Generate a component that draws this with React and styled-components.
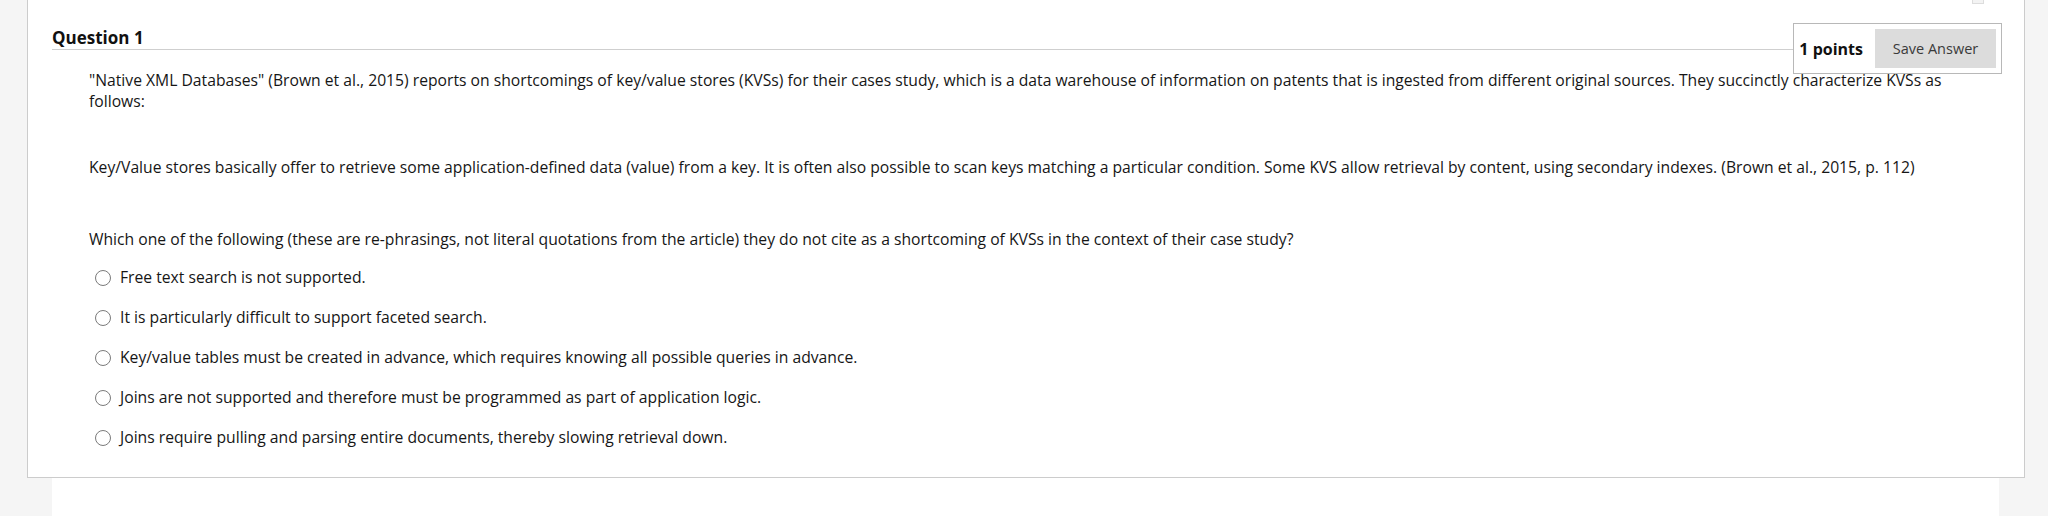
import * as React from "react"
import styled, { createGlobalStyle } from "styled-components"

const GlobalStyle = createGlobalStyle`
  body {
    margin: 0;
    background: #ffffff;
    font-family: "Open Sans", "Liberation Sans", sans-serif;
    color: #161616;
  }
`

const options = [
  "Free text search is not supported.",
  "It is particularly difficult to support faceted search.",
  "Key/value tables must be created in advance, which requires knowing all possible queries in advance.",
  "Joins are not supported and therefore must be programmed as part of application logic.",
  "Joins require pulling and parsing entire documents, thereby slowing retrieval down.",
]

const App = () => {
  return (
    <>
      <GlobalStyle />
      <Stage>
        <Panel>
          <Nub />
          <Header>
            <Title>Question 1</Title>
            <PointsBox>
              <Points>1 points</Points>
              <SaveButton type="button">Save Answer</SaveButton>
            </PointsBox>
          </Header>
          <Body>
            <Paragraph>
              "Native XML Databases" (Brown et al., 2015) reports on shortcomings of key/value stores (KVSs) for
              their cases study, which is a data warehouse of information on patents that is ingested from different
              original sources. They succinctly characterize KVSs as follows:
            </Paragraph>
            <Paragraph $gap={45}>
              Key/Value stores basically offer to retrieve some application-defined data (value) from a key. It is
              often also possible to scan keys matching a particular condition. Some KVS allow retrieval by content,
              using secondary indexes. (Brown et al., 2015, p. 112)
            </Paragraph>
            <Paragraph $gap={52}>
              Which one of the following (these are re-phrasings, not literal quotations from the article) they do
              not cite as a shortcoming of KVSs in the context of their case study?
            </Paragraph>
            <OptionList>
              {options.map((text) => (
                <Option key={text}>
                  <Radio type="radio" name="q1" />
                  <span>{text}</span>
                </Option>
              ))}
            </OptionList>
          </Body>
        </Panel>
        <Strip />
      </Stage>
    </>
  )
}

const Stage = styled.div`
  background: #f5f5f5;
  height: 516px;
  overflow: hidden;
`

const Panel = styled.section`
  position: relative;
  margin-left: 27px;
  width: 1998px;
  box-sizing: border-box;
  height: 478px;
  background: #ffffff;
  border: 1px solid #cccccc;
  border-top: none;
`

const Nub = styled.div`
  position: absolute;
  top: -8px;
  left: 1944px;
  width: 10px;
  height: 10px;
  background: #f3f3f3;
  border: 1px solid #dddddd;
`

const Header = styled.header`
  display: flex;
  align-items: flex-start;
  height: 50px;
  padding-left: 24px;
  padding-right: 22px;
`

const Title = styled.h2`
  flex: 1;
  margin: 0;
  padding: 27px 0 1px;
  font-size: 17px;
  line-height: 21px;
  font-weight: 700;
  color: #111111;
  border-bottom: 1px solid #cfcfcf;
`

const PointsBox = styled.div`
  display: flex;
  align-items: center;
  gap: 12px;
  margin-top: 23px;
  padding: 5px;
  border: 1px solid #b8b8b8;
  background: #ffffff;
`

const Points = styled.span`
  font-size: 16px;
  font-weight: 700;
  color: #111111;
`

const SaveButton = styled.button`
  width: 121px;
  height: 39px;
  border: none;
  background: #dcdcdc;
  font-family: "Open Sans", "Liberation Sans", sans-serif;
  font-size: 14.5px;
  color: #3a3a3a;
  padding: 0;
`

const Body = styled.div`
  padding: 0 60px 0 61px;
  margin-top: 20px;
`

const Paragraph = styled.p`
  margin: ${(p) => p.$gap || 0}px 0 0;
  font-size: 15.7px;
  line-height: 20.8px;
`

const OptionList = styled.div`
  display: flex;
  flex-direction: column;
  gap: 19.2px;
  margin-top: 17px;
  padding-left: 6px;
`

const Option = styled.label`
  display: flex;
  align-items: center;
  gap: 9px;
  font-size: 15.7px;
  line-height: 20.8px;
`

const Radio = styled.input`
  appearance: none;
  margin: 0;
  width: 16px;
  height: 16px;
  border: 1px solid #7a7a7a;
  border-radius: 50%;
  background: #ffffff;
  box-sizing: border-box;
`

const Strip = styled.div`
  margin-left: 52px;
  width: 1947px;
  height: 38px;
  background: #ffffff;
`

export default App
